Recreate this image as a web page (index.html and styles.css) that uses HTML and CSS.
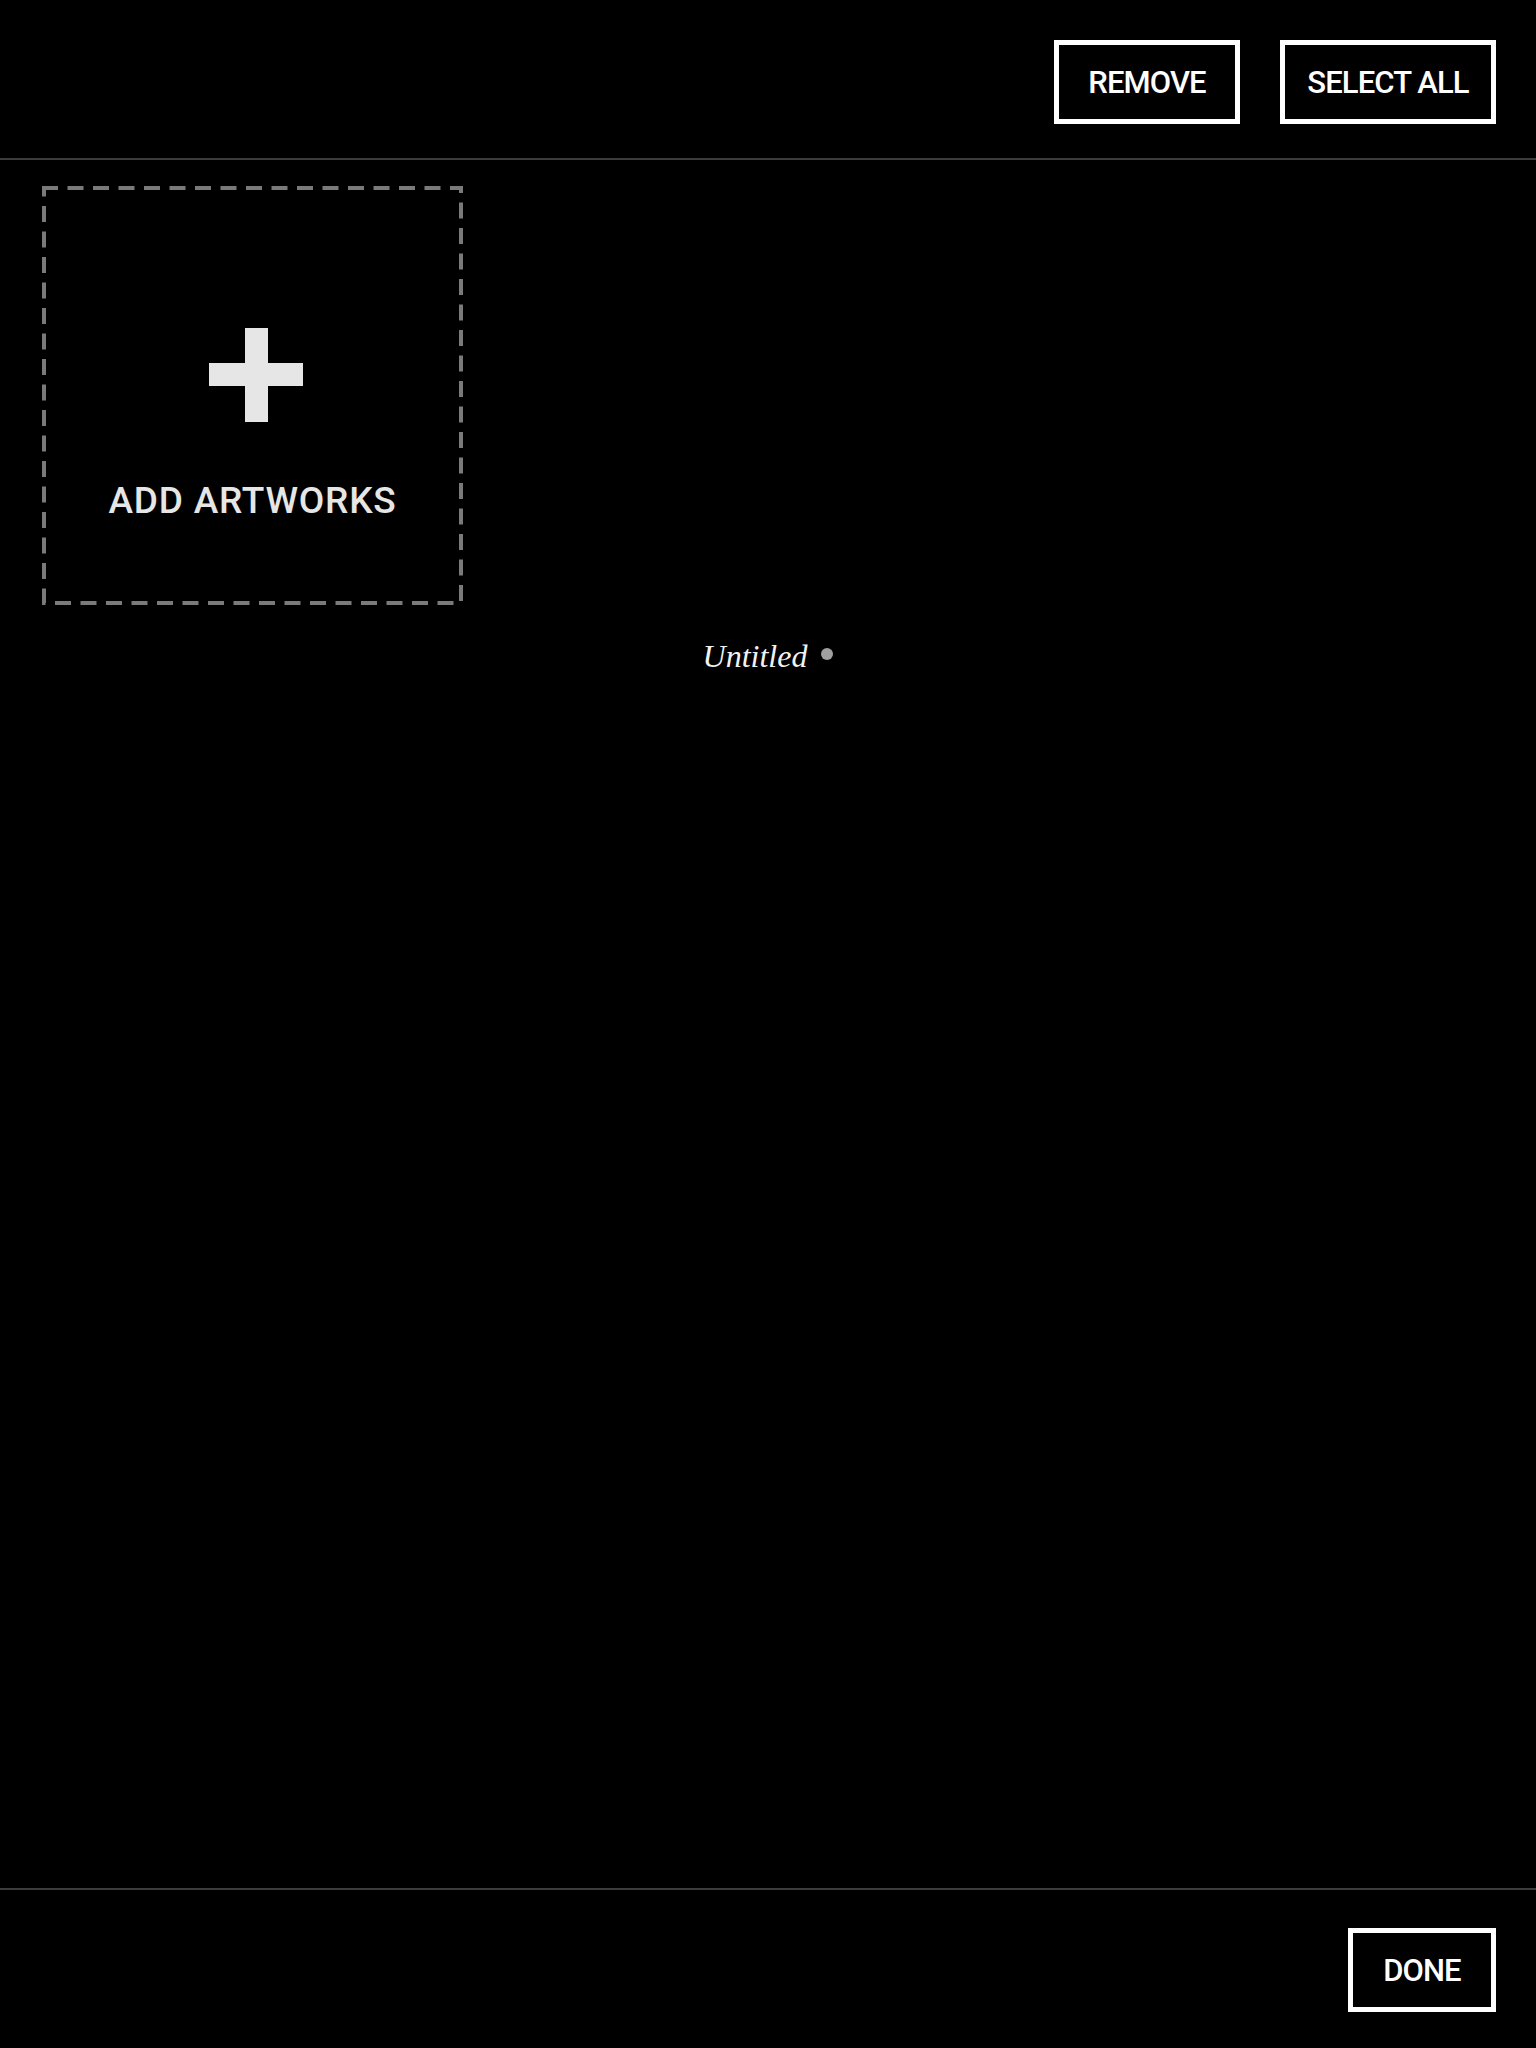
FILE: index.html
```html
<!DOCTYPE html>
<html lang="en">

<head>
  <meta charset="UTF-8">
  <meta name="viewport" content="width=device-width, initial-scale=1.0">
  <title>Edit Collection</title>
  <link rel="stylesheet" href="styles.css">
</head>

<body>

  <header class="toolbar">
    <button class="btn btn-remove">REMOVE</button>
    <button class="btn btn-select">SELECT ALL</button>
  </header>

  <main class="content">
    <div class="grid">
      <div class="add-tile">
        <svg class="dashes" width="421" height="419" viewBox="0 0 421 419">
          <rect x="2" y="2" width="417" height="415" fill="none" stroke="#7a7a7a" stroke-width="4" stroke-dasharray="16 9.5" stroke-dashoffset="2"/>
        </svg>
        <div class="plus">
          <span class="plus-v"></span>
          <span class="plus-h"></span>
        </div>
        <div class="add-label">ADD ARTWORKS</div>
      </div>
    </div>

    <p class="title">Untitled<span class="dot"></span></p>
  </main>

  <footer class="bottombar">
    <button class="btn btn-done">DONE</button>
  </footer>

</body>

</html>
```

FILE: styles.css
```css
body {
  margin: 0;
  min-height: 100vh;
  display: flex;
  flex-direction: column;
  background-color: #000;
  color: #fff;
  font-family: Roboto, "Liberation Sans", Arial, sans-serif;
}

.toolbar {
  display: flex;
  justify-content: flex-end;
  gap: 40px;
  padding: 40px 40px 34px;
  border-bottom: 2px solid #3c3c3c;
}

.btn {
  height: 84px;
  padding: 0;
  background: #000;
  color: #fff;
  border: 5px solid #fff;
  font-family: Roboto, "Liberation Sans", Arial, sans-serif;
  font-weight: 500;
  font-size: 31px;
  letter-spacing: -0.9px;
  cursor: pointer;
}

.btn-remove {
  width: 186px;
}

.btn-select {
  width: 216px;
}

.btn-done {
  width: 148px;
}

.content {
  flex: 1;
  padding: 26px 42px 0;
}

.grid {
  display: flex;
}

.add-tile {
  position: relative;
  width: 421px;
  height: 419px;
  box-sizing: border-box;
  display: flex;
  flex-direction: column;
  align-items: center;
  padding-top: 142px;
}

.dashes {
  position: absolute;
  top: 0;
  left: 0;
}

.plus {
  position: relative;
  width: 94px;
  height: 94px;
  margin-left: 7px;
}

.plus-v,
.plus-h {
  position: absolute;
  background: #e6e6e6;
}

.plus-v {
  left: 36px;
  top: 0;
  width: 23px;
  height: 94px;
}

.plus-h {
  left: 0;
  top: 35px;
  width: 94px;
  height: 23px;
}

.add-label {
  margin-top: 60px;
  font-size: 37px;
  font-weight: 500;
  line-height: 37px;
  letter-spacing: 0.8px;
  color: #e6e6e6;
}

.title {
  margin: 35px 0 0;
  text-align: center;
  font-family: "Liberation Serif", "Times New Roman", serif;
  font-style: italic;
  font-size: 32px;
  line-height: 32px;
  color: #f2f2f2;
}

.dot {
  display: inline-block;
  width: 12px;
  height: 12px;
  margin-left: 14px;
  border-radius: 50%;
  background: #a0a0a0;
  vertical-align: 7px;
}

.bottombar {
  display: flex;
  justify-content: flex-end;
  padding: 38px 40px 36px;
  border-top: 2px solid #3c3c3c;
}
```
